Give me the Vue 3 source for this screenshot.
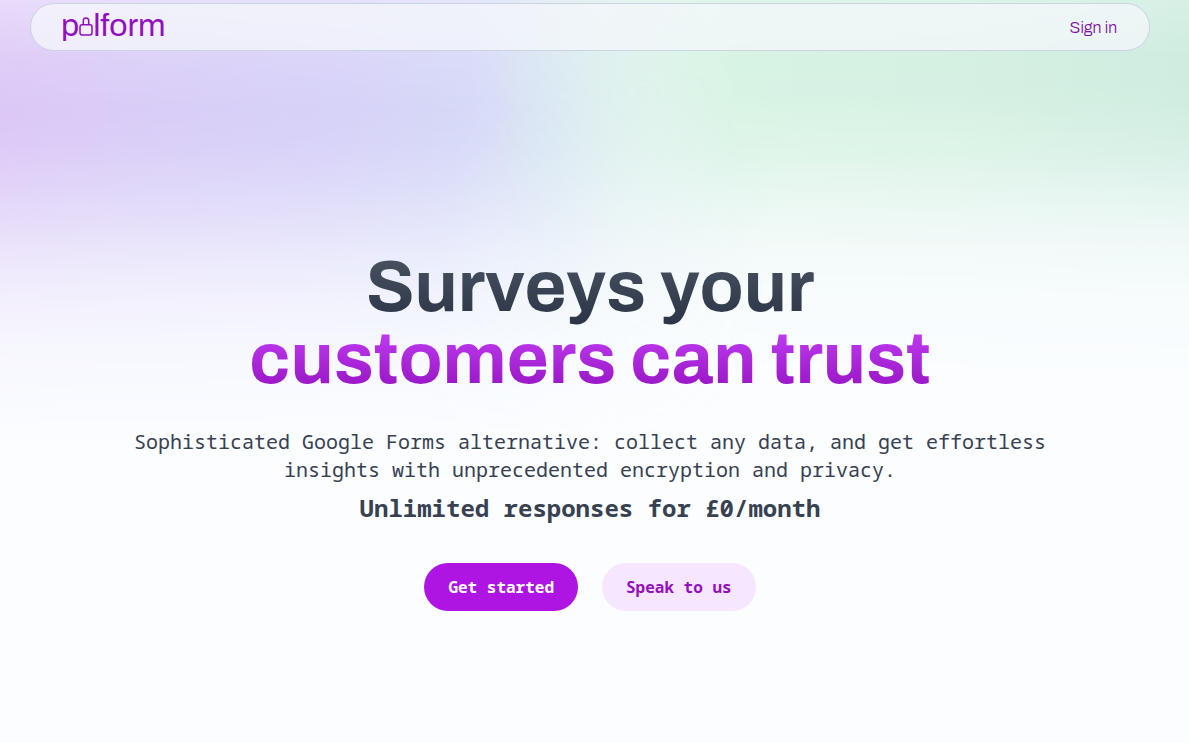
<script setup>
const headline = { top: 'Surveys your', accent: 'customers can trust' }
</script>

<template>
  <div class="page">
    <div class="glow glow-left" aria-hidden="true"></div>
    <div class="glow glow-right" aria-hidden="true"></div>

    <header class="navbar">
      <a class="logo" href="#" aria-label="palform">
        <span>p</span>
        <svg class="lock" viewBox="0 0 14 19" fill="none" stroke="currentColor" aria-hidden="true">
          <rect x="1" y="7.7" width="12" height="10.3" rx="2.2" stroke-width="1.5" />
          <path d="M4.3 7.5V3.8a2.7 2.7 0 0 1 5.4 0v3.7" stroke-width="1.5" />
        </svg>
        <span>lform</span>
      </a>
      <a class="sign-in" href="#">Sign in</a>
    </header>

    <main class="hero">
      <h1>
        <span class="dark">{{ headline.top }}</span>
        <br />
        <span class="accent">{{ headline.accent }}</span>
      </h1>
      <p class="lead">
        Sophisticated Google Forms alternative: collect any data, and get effortless insights with
        unprecedented encryption and privacy.
      </p>
      <p class="offer">Unlimited responses for £0/month</p>
      <div class="actions">
        <button type="button" class="primary">Get started</button>
        <button type="button" class="secondary">Speak to us</button>
      </div>
    </main>
  </div>
</template>

<style>
body {
  background: #fbfdff;
}
</style>

<style scoped>
.page {
  position: relative;
  box-sizing: border-box;
  min-height: 100vh;
  padding: 3px 39px 0 30px;
  background: #fbfdff;
  font-family: "Noto Sans Mono", "DejaVu Sans Mono", monospace;
  color: #374151;
}

.glow {
  position: absolute;
  inset: 0 0 auto;
  height: 460px;
}

.glow-left {
  background: linear-gradient(98deg, #dbc5f6 0%, #d8cbf7 12%, #d5d0f8 28%, #d4d7f7 38%, rgba(215, 226, 245, 0.85) 46%, rgba(220, 234, 246, 0.5) 53%, rgba(225, 240, 245, 0) 64%);
  mask-image: linear-gradient(
    rgba(0, 0, 0, 0.6) 0,
    rgba(0, 0, 0, 0.88) 60px,
    rgba(0, 0, 0, 0.97) 110px,
    rgba(0, 0, 0, 0.92) 145px,
    rgba(0, 0, 0, 0.8) 180px,
    rgba(0, 0, 0, 0.64) 215px,
    rgba(0, 0, 0, 0.46) 250px,
    rgba(0, 0, 0, 0.24) 300px,
    rgba(0, 0, 0, 0.1) 350px,
    transparent 450px
  );
}

.glow-right {
  background: linear-gradient(88deg, rgba(216, 243, 227, 0) 42%, rgba(216, 243, 228, 0.4) 50%, #d7f3e3 62%, #d5f1e2 80%, #ceece0 100%);
  mask-image: linear-gradient(
    rgba(0, 0, 0, 0.8) 0,
    #000 60px,
    rgba(0, 0, 0, 0.96) 100px,
    rgba(0, 0, 0, 0.78) 150px,
    rgba(0, 0, 0, 0.46) 200px,
    rgba(0, 0, 0, 0.2) 250px,
    rgba(0, 0, 0, 0.07) 300px,
    transparent 380px
  );
}

.navbar {
  position: relative;
  display: flex;
  align-items: center;
  justify-content: space-between;
  box-sizing: border-box;
  height: 48px;
  padding: 0 32px 0 30px;
  border: 1px solid #cbd5e1;
  border-radius: 24px;
  background: rgba(244, 247, 251, 0.75);
  font-family: Archivo, "Liberation Sans", Arial, sans-serif;
}

.logo {
  display: flex;
  align-items: baseline;
  padding-bottom: 2px;
  font-size: 32px;
  line-height: 40px;
  color: #930fbf;
  text-decoration: none;
}

.lock {
  width: 14px;
  height: 19px;
}

.sign-in {
  padding-top: 1px;
  font-size: 16px;
  font-weight: 300;
  line-height: 24px;
  color: #7e0fa3;
  text-decoration: none;
}

.hero {
  position: relative;
  display: flex;
  flex-direction: column;
  align-items: center;
  padding-top: 200px;
  text-align: center;
}

h1 {
  margin: 0;
  font-family: Archivo, "Liberation Sans", Arial, sans-serif;
  font-size: 72px;
  font-weight: 700;
  line-height: 72px;
}

.dark,
.accent {
  color: transparent;
  background-clip: text;
}

.dark {
  background-image: linear-gradient(#4b5563, #2a3446);
}

.accent {
  background-image: linear-gradient(#c742f9, #9210be);
}

.lead {
  max-width: 960px;
  margin: 33px 0 0;
  font-size: 20px;
  line-height: 28px;
}

.offer {
  margin: 8px 0 0;
  font-size: 24px;
  font-weight: 700;
  line-height: 32px;
}

.actions {
  display: flex;
  gap: 24px;
  margin-top: 39px;
}

button {
  padding: 12px 24px;
  border: 0;
  border-radius: 24px;
  font: inherit;
  font-size: 16px;
  font-weight: 700;
  line-height: 24px;
}

.primary {
  color: #fff;
  background: #ae15e3;
}

.secondary {
  color: #930fbf;
  background: #f6e6ff;
}
</style>
